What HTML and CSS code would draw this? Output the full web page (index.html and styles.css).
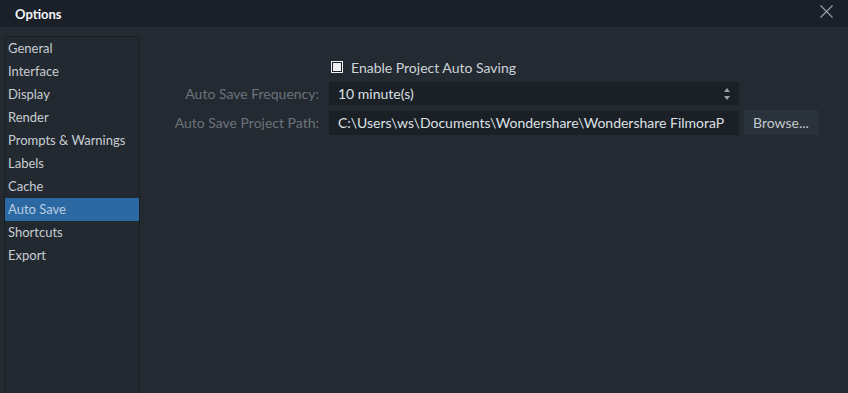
FILE: index.html
```html
<!DOCTYPE html>
<html lang="en">
<head>
    <meta charset="UTF-8">
    <title>Options</title>
    <link rel="stylesheet" href="styles.css">
</head>
<body>
    <div class="titlebar">
        <span class="title">Options</span>
        <svg class="close" width="13" height="13" viewBox="0 0 13 13">
            <path d="M0.5 0.5 L12.5 12.5 M12.5 0.5 L0.5 12.5" stroke="#9aa3ad" stroke-width="1.1" fill="none"/>
        </svg>
    </div>

    <div class="main">
        <div class="sidebar">
            <a href="#">General</a>
            <a href="#">Interface</a>
            <a href="#">Display</a>
            <a href="#">Render</a>
            <a href="#">Prompts &amp; Warnings</a>
            <a href="#">Labels</a>
            <a href="#">Cache</a>
            <a href="#" class="active">Auto Save</a>
            <a href="#">Shortcuts</a>
            <a href="#">Export</a>
        </div>

        <div class="content">
            <div class="form">
                <div></div>
                <label class="check"><span class="box"></span>Enable Project Auto Saving</label>
                <div></div>

                <span class="label">Auto Save Frequency:</span>
                <div class="field spin">
                    <span>10 minute(s)</span>
                    <span class="arrows">
                        <svg width="6" height="4" viewBox="0 0 6 4"><path d="M0 4 L3 0 L6 4 Z" fill="#9aa1a9"/></svg>
                        <svg width="6" height="4" viewBox="0 0 6 4"><path d="M0 0 L3 4 L6 0 Z" fill="#9aa1a9"/></svg>
                    </span>
                </div>
                <div></div>

                <span class="label">Auto Save Project Path:</span>
                <div class="field path">C:\Users\ws\Documents\Wondershare\Wondershare FilmoraP</div>
                <button class="browse">Browse...</button>
            </div>
        </div>
    </div>
</body>
</html>
```

FILE: styles.css
```css
/* Global styles */
html, body {
    height: 100%;
    margin: 0;
    padding: 0;
    font-family: 'Lato', 'Liberation Sans', sans-serif;
    font-size: 13px;
    background-color: #232a32;
    color: #d4d8dc;
    overflow: hidden;
}

body {
    display: flex;
    flex-direction: column;
}

.titlebar {
    height: 27px;
    background-color: #1b2028;
    display: flex;
    align-items: center;
    justify-content: space-between;
    padding: 0 15px 0 15px;
    flex-shrink: 0;
}

.title {
    font-weight: bold;
    font-size: 13px;
    color: #f2f4f6;
}

.close {
    margin-top: -4px;
}

.main {
    flex: 1;
    display: flex;
    padding: 9px 0 0 4px;
}

/* Sidebar */
.sidebar {
    width: 134px;
    background-color: #222931;
    border: 1px solid #1a1f26;
    border-bottom: none;
    display: flex;
    flex-direction: column;
}

.sidebar a {
    color: #c9cdd1;
    text-decoration: none;
    height: 23px;
    line-height: 23px;
    padding-left: 3px;
}

.sidebar a.active {
    background-color: #2c69a2;
    color: #b9cde2;
}

/* Auto save form */
.content {
    flex: 1;
    padding: 21px 0 0 30px;
    font-size: 14px;
}

.form {
    display: grid;
    grid-template-columns: 154px 410px auto;
    column-gap: 5px;
    row-gap: 5px;
    align-items: center;
}

.check {
    display: flex;
    align-items: center;
    height: 20px;
    padding-left: 2px;
    color: #cfd3d7;
}

.box {
    box-sizing: border-box;
    width: 12px;
    height: 12px;
    border: 1.5px solid #eef0f2;
    background-color: #eef0f2;
    box-shadow: inset 0 0 0 1px #1b2028;
    margin-right: 8px;
}

.label {
    text-align: right;
    color: #6c737b;
    padding-right: 5px;
}

.field {
    background-color: #1b2027;
    height: 24px;
    display: flex;
    align-items: center;
    padding: 0 6px 0 9px;
    color: #dde1e5;
    white-space: nowrap;
    overflow: hidden;
}

.spin {
    justify-content: space-between;
    height: 23px;
}

.arrows {
    display: flex;
    flex-direction: column;
    gap: 4px;
    margin-right: 3px;
}

.arrows svg {
    display: block;
}

.browse {
    justify-self: start;
    height: 25px;
    padding: 0 9px;
    font-family: inherit;
    font-size: 14px;
    color: #c3c8cd;
    background-color: #2a323b;
    border: none;
}
```
